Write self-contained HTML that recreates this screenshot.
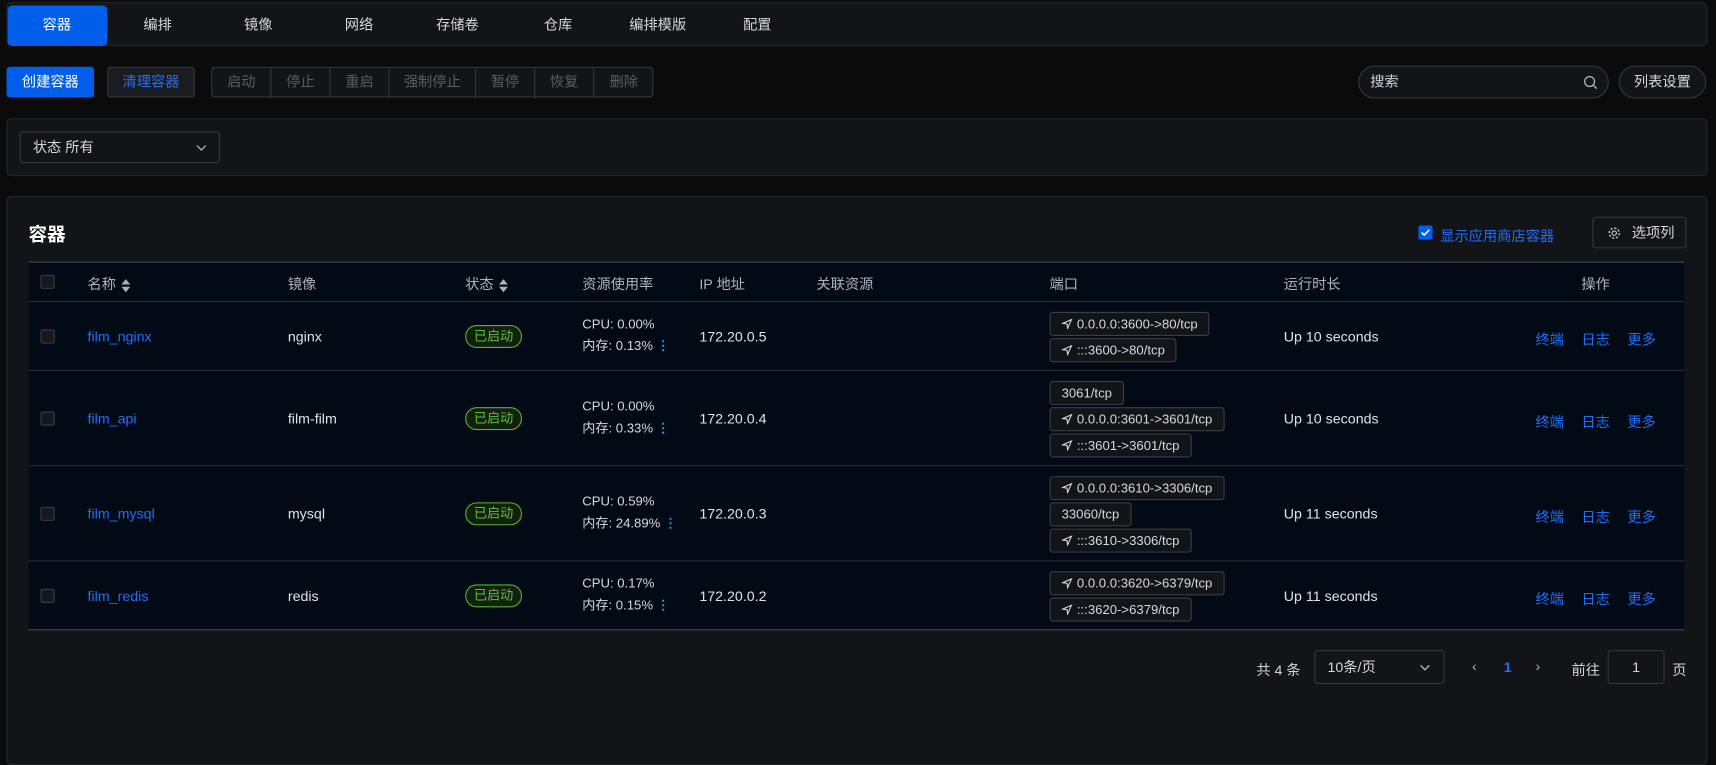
<!DOCTYPE html>
<html><head><meta charset="utf-8"><style>
*{box-sizing:border-box;margin:0;padding:0}
body{width:1716px;height:686px;overflow:hidden;background:#0b0b0b;font-family:"Liberation Sans","Noto Sans CJK SC",sans-serif;font-size:13px;color:#cfd3dc;position:relative}
#w{position:absolute;left:0;top:0;width:1568px;height:627px;transform:scale(1.0944);transform-origin:0 0}
.a{position:absolute}
.panel{position:absolute;background:#121418;border:1px solid #23262b;border-radius:4px}
.tab{position:absolute;top:5px;height:36px;line-height:36px;text-align:center;width:92px;font-size:13px;color:#d5d8de}
.btn{position:absolute;height:28px;line-height:26px;text-align:center;border-radius:3px;font-size:13px}
.seg{position:absolute;top:0;height:28px;line-height:26px;text-align:center;color:#5a5d63;border-right:1px solid #33363b}
.th{position:absolute;top:249px;font-size:13px;color:#aeb3bb}
.row{position:absolute;left:26px;width:1513px;border-bottom:1px solid #2a2d32}
.cb{position:absolute;width:13px;height:13px;border:1px solid #3a3d42;border-radius:2px;background:#16181c}
.lnk{color:#1f6fff}
.tag{position:absolute;height:22px;line-height:20px;border:1px solid #3b3e43;background:#121418;border-radius:3px;font-size:12px;color:#d5d8de;padding:0 10px;white-space:nowrap}
.tag svg{vertical-align:-1px;margin-right:4px}
.st{position:absolute;left:425px;width:52px;height:21px;line-height:19px;border:1px solid #4fb82a;border-radius:11px;color:#5cc23a;font-size:12px;text-align:center;background:#132010}
.res{position:absolute;left:532px;font-size:12px;line-height:20px;color:#d5d8de}
.dots{color:#3a8ef0;font-weight:bold}
.sort{display:inline-block;vertical-align:middle;margin-left:5px;width:9px;height:12px;position:relative}
.sort:before{content:"";position:absolute;top:0;left:0;border:4.5px solid transparent;border-bottom:5px solid #aeb3bb;border-top:0}
.sort:after{content:"";position:absolute;bottom:0;left:0;border:4.5px solid transparent;border-top:5px solid #aeb3bb;border-bottom:0}
</style></head><body><div id="w">

<div class="panel" style="left:6px;top:2px;width:1554px;height:40px"></div>
<div class="a" style="left:7px;top:5px;width:91px;height:37px;background:#005eeb;border-radius:4px"></div>
<div class="tab" style="left:6px;color:#fff">容器</div>
<div class="tab" style="left:98px">编排</div>
<div class="tab" style="left:190px">镜像</div>
<div class="tab" style="left:282px">网络</div>
<div class="tab" style="left:372px">存储卷</div>
<div class="tab" style="left:464px">仓库</div>
<div class="tab" style="left:555px">编排模版</div>
<div class="tab" style="left:646px">配置</div>

<div class="btn" style="left:6px;top:61px;width:80px;background:#005eeb;color:#fff;border:1px solid #005eeb">创建容器</div>
<div class="btn" style="left:98px;top:61px;width:80px;background:#1a1c20;color:#1f6fff;border:1px solid #35383d">清理容器</div>
<div class="a" style="left:193px;top:61px;width:404px;height:28px;border:1px solid #33363b;border-radius:3px;background:#121418">
<div class="seg" style="left:0;width:54px">启动</div>
<div class="seg" style="left:54px;width:54px">停止</div>
<div class="seg" style="left:108px;width:54px">重启</div>
<div class="seg" style="left:162px;width:79px">强制停止</div>
<div class="seg" style="left:241px;width:54px">暂停</div>
<div class="seg" style="left:295px;width:54px">恢复</div>
<div class="seg" style="left:349px;width:54px;border-right:0">删除</div>
</div>
<div class="a" style="left:1241px;top:60px;width:229px;height:30px;border:1px solid #33363b;border-radius:15px;background:#121418;padding-left:10px;line-height:28px;color:#cfd3dc">搜索
<svg class="a" style="left:205px;top:8px" width="13" height="13" viewBox="0 0 13 13"><circle cx="5.5" cy="5.5" r="4.5" fill="none" stroke="#aeb3bb" stroke-width="1.2"/><line x1="9" y1="9" x2="12" y2="12" stroke="#aeb3bb" stroke-width="1.2"/></svg></div>
<div class="a" style="left:1479px;top:60px;width:80px;height:30px;border:1px solid #33363b;border-radius:15px;background:#121418;text-align:center;line-height:28px;color:#d5d8de">列表设置</div>

<div class="panel" style="left:6px;top:108px;width:1554px;height:53px"></div>
<div class="a" style="left:18px;top:120px;width:183px;height:29px;border:1px solid #35383d;border-radius:3px;background:#121418;padding-left:11px;line-height:27px;color:#d5d8de">状态 所有
<svg class="a" style="left:160px;top:11px" width="10" height="6" viewBox="0 0 10 6"><path d="M1 1l4 4 4-4" fill="none" stroke="#aeb3bb" stroke-width="1.2"/></svg></div>

<div class="panel" style="left:6px;top:179px;width:1554px;height:520px"></div>
<div class="a" style="left:26px;top:200px;font-size:17px;font-weight:bold;color:#fff">容器</div>
<div class="a" style="left:1296px;top:206px;width:13px;height:13px;background:#005eeb;border-radius:2px"><svg width="13" height="13" viewBox="0 0 13 13" style="display:block"><path d="M3 6.5l2.3 2.3L10 4" fill="none" stroke="#fff" stroke-width="1.4"/></svg></div>
<div class="a lnk" style="left:1316px;top:205px;font-size:13px">显示应用商店容器</div>
<div class="a" style="left:1455px;top:198px;width:86px;height:29px;border:1px solid #35383d;border-radius:3px;line-height:27px;padding-left:35px;color:#d5d8de">选项列
<svg class="a" style="left:13px;top:8px" width="12" height="12" viewBox="0 0 12 12"><circle cx="6" cy="6" r="2" fill="none" stroke="#cfd3dc" stroke-width="1"/><circle cx="6" cy="6" r="4.6" fill="none" stroke="#cfd3dc" stroke-width="1.2" stroke-dasharray="2 1.6"/></svg></div>

<div class="a" style="left:26px;top:239px;width:1513px;height:337px;background:#010a15;border-top:1px solid #45484d"></div>
<div class="row" style="top:240px;height:36px"></div>
<div class="cb" style="left:37px;top:251px"></div>
<div class="th" style="left:80px">名称<span class="sort"></span></div>
<div class="th" style="left:263px">镜像</div>
<div class="th" style="left:425px">状态<span class="sort"></span></div>
<div class="th" style="left:532px">资源使用率</div>
<div class="th" style="left:639px">IP 地址</div>
<div class="th" style="left:746px">关联资源</div>
<div class="th" style="left:959px">端口</div>
<div class="th" style="left:1173px">运行时长</div>
<div class="th" style="left:1445px">操作</div>

<!-- row1 -->
<div class="row" style="top:276px;height:63px"></div>
<div class="cb" style="left:37px;top:301px"></div>
<div class="a lnk" style="left:80px;top:300px">film_nginx</div>
<div class="a" style="left:263px;top:300px;color:#e0e3e8">nginx</div>
<div class="st" style="top:297px">已启动</div>
<div class="res" style="top:286px">CPU: 0.00%<br>内存: 0.13% <span class="dots">⋮</span></div>
<div class="a" style="left:639px;top:300px;color:#e0e3e8">172.20.0.5</div>
<div class="tag" style="left:959px;top:285px"><svg width="10" height="10" viewBox="0 0 10 10"><path d="M9 1L1 4.5l4 .5.5 4z" fill="none" stroke="#d5d8de" stroke-width="1"/></svg>0.0.0.0:3600-&gt;80/tcp</div>
<div class="tag" style="left:959px;top:309px"><svg width="10" height="10" viewBox="0 0 10 10"><path d="M9 1L1 4.5l4 .5.5 4z" fill="none" stroke="#d5d8de" stroke-width="1"/></svg>:::3600-&gt;80/tcp</div>
<div class="a" style="left:1173px;top:300px;color:#e0e3e8">Up 10 seconds</div>
<div class="a lnk" style="left:1403px;top:300px">终端</div><div class="a lnk" style="left:1445px;top:300px">日志</div><div class="a lnk" style="left:1487px;top:300px">更多</div>

<!-- row2 -->
<div class="row" style="top:339px;height:87px"></div>
<div class="cb" style="left:37px;top:376px"></div>
<div class="a lnk" style="left:80px;top:375px">film_api</div>
<div class="a" style="left:263px;top:375px;color:#e0e3e8">film-film</div>
<div class="st" style="top:372px">已启动</div>
<div class="res" style="top:361px">CPU: 0.00%<br>内存: 0.33% <span class="dots">⋮</span></div>
<div class="a" style="left:639px;top:375px;color:#e0e3e8">172.20.0.4</div>
<div class="tag" style="left:959px;top:348px">3061/tcp</div>
<div class="tag" style="left:959px;top:372px"><svg width="10" height="10" viewBox="0 0 10 10"><path d="M9 1L1 4.5l4 .5.5 4z" fill="none" stroke="#d5d8de" stroke-width="1"/></svg>0.0.0.0:3601-&gt;3601/tcp</div>
<div class="tag" style="left:959px;top:396px"><svg width="10" height="10" viewBox="0 0 10 10"><path d="M9 1L1 4.5l4 .5.5 4z" fill="none" stroke="#d5d8de" stroke-width="1"/></svg>:::3601-&gt;3601/tcp</div>
<div class="a" style="left:1173px;top:375px;color:#e0e3e8">Up 10 seconds</div>
<div class="a lnk" style="left:1403px;top:375px">终端</div><div class="a lnk" style="left:1445px;top:375px">日志</div><div class="a lnk" style="left:1487px;top:375px">更多</div>

<!-- row3 -->
<div class="row" style="top:426px;height:87px"></div>
<div class="cb" style="left:37px;top:463px"></div>
<div class="a lnk" style="left:80px;top:462px">film_mysql</div>
<div class="a" style="left:263px;top:462px;color:#e0e3e8">mysql</div>
<div class="st" style="top:459px">已启动</div>
<div class="res" style="top:448px">CPU: 0.59%<br>内存: 24.89% <span class="dots">⋮</span></div>
<div class="a" style="left:639px;top:462px;color:#e0e3e8">172.20.0.3</div>
<div class="tag" style="left:959px;top:435px"><svg width="10" height="10" viewBox="0 0 10 10"><path d="M9 1L1 4.5l4 .5.5 4z" fill="none" stroke="#d5d8de" stroke-width="1"/></svg>0.0.0.0:3610-&gt;3306/tcp</div>
<div class="tag" style="left:959px;top:459px">33060/tcp</div>
<div class="tag" style="left:959px;top:483px"><svg width="10" height="10" viewBox="0 0 10 10"><path d="M9 1L1 4.5l4 .5.5 4z" fill="none" stroke="#d5d8de" stroke-width="1"/></svg>:::3610-&gt;3306/tcp</div>
<div class="a" style="left:1173px;top:462px;color:#e0e3e8">Up 11 seconds</div>
<div class="a lnk" style="left:1403px;top:462px">终端</div><div class="a lnk" style="left:1445px;top:462px">日志</div><div class="a lnk" style="left:1487px;top:462px">更多</div>

<!-- row4 -->
<div class="row" style="top:513px;height:63px;border-bottom:1px solid #45484d"></div>
<div class="cb" style="left:37px;top:538px"></div>
<div class="a lnk" style="left:80px;top:537px">film_redis</div>
<div class="a" style="left:263px;top:537px;color:#e0e3e8">redis</div>
<div class="st" style="top:534px">已启动</div>
<div class="res" style="top:523px">CPU: 0.17%<br>内存: 0.15% <span class="dots">⋮</span></div>
<div class="a" style="left:639px;top:537px;color:#e0e3e8">172.20.0.2</div>
<div class="tag" style="left:959px;top:522px"><svg width="10" height="10" viewBox="0 0 10 10"><path d="M9 1L1 4.5l4 .5.5 4z" fill="none" stroke="#d5d8de" stroke-width="1"/></svg>0.0.0.0:3620-&gt;6379/tcp</div>
<div class="tag" style="left:959px;top:546px"><svg width="10" height="10" viewBox="0 0 10 10"><path d="M9 1L1 4.5l4 .5.5 4z" fill="none" stroke="#d5d8de" stroke-width="1"/></svg>:::3620-&gt;6379/tcp</div>
<div class="a" style="left:1173px;top:537px;color:#e0e3e8">Up 11 seconds</div>
<div class="a lnk" style="left:1403px;top:537px">终端</div><div class="a lnk" style="left:1445px;top:537px">日志</div><div class="a lnk" style="left:1487px;top:537px">更多</div>

<!-- pagination -->
<div class="a" style="left:1148px;top:602px;color:#cfd3dc">共 4 条</div>
<div class="a" style="left:1201px;top:594px;width:119px;height:31px;border:1px solid #35383d;border-radius:3px;padding-left:11px;line-height:29px;color:#d5d8de">10条/页
<svg class="a" style="left:95px;top:12px" width="10" height="6" viewBox="0 0 10 6"><path d="M1 1l4 4 4-4" fill="none" stroke="#aeb3bb" stroke-width="1.2"/></svg></div>
<div class="a" style="left:1345px;top:601px;color:#aeb3bb">‹</div>
<div class="a" style="left:1374px;top:602px;color:#1f6fff;font-weight:bold">1</div>
<div class="a" style="left:1403px;top:601px;color:#aeb3bb">›</div>
<div class="a" style="left:1436px;top:602px;color:#cfd3dc">前往</div>
<div class="a" style="left:1469px;top:594px;width:52px;height:31px;border:1px solid #35383d;border-radius:3px;text-align:center;line-height:29px;color:#d5d8de">1</div>
<div class="a" style="left:1528px;top:602px;color:#cfd3dc">页</div>
</div></body></html>
